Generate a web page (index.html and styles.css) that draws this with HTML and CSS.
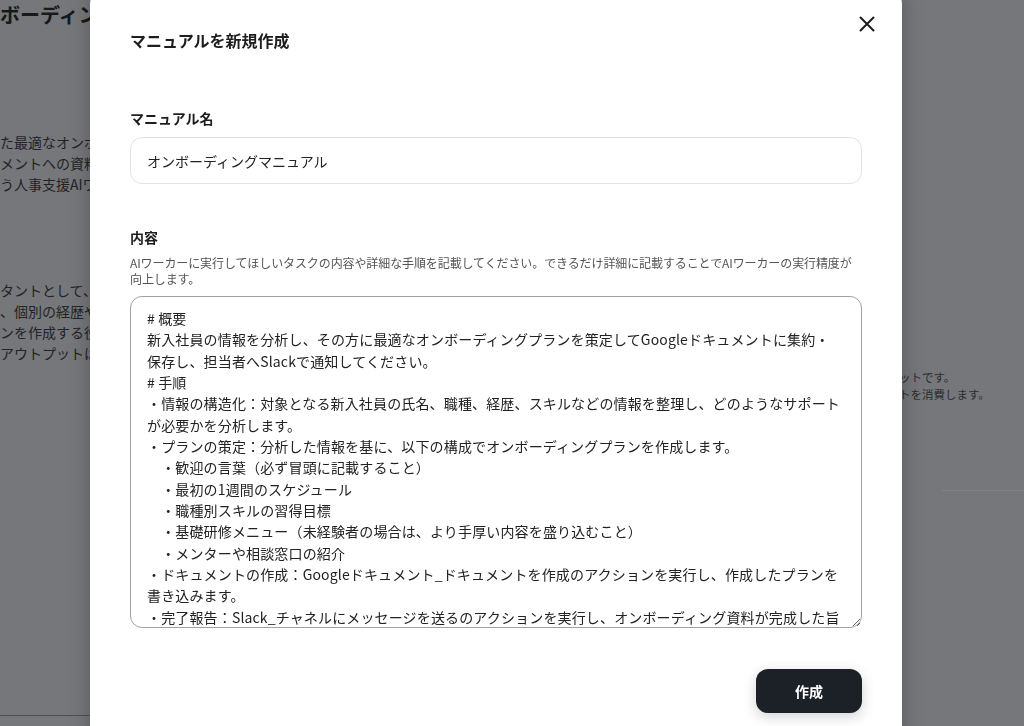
FILE: index.html
```html
<!DOCTYPE html>
<html lang="ja">
<head>
<meta charset="UTF-8">
<title>マニュアルを新規作成</title>
<link rel="stylesheet" href="styles.css">
</head>
<body>
<!-- 背景のワーカー詳細ページ（モーダル表示中なので暗い色） -->
<div class="page">
  <div class="page-main">
    <h1 class="page-title">ボーディング資料作成AIワーカー</h1>
    <p class="lead first">た最適なオンボーディング資料を作成し、<br>メントへの資料の保存とSlackでの通知までを<br>う人事支援AIワーカーです。</p>
    <p class="lead">タントとして、新入社員の情報をもとに<br>、個別の経歴やスキルに合わせたプラ<br>ンを作成する役割を担います。<br>アウトプットはGoogleドキュメントです。</p>
    <div class="page-rule"></div>
  </div>
  <aside class="page-side">
    <p class="side-note">チケットです。<br>ケットを消費します。</p>
    <div class="side-rule"></div>
  </aside>
</div>

<div class="overlay">
  <div class="modal">
    <div class="modal-header">
      <h2 class="modal-title">マニュアルを新規作成</h2>
      <button type="button" class="close-btn" aria-label="閉じる">
        <svg width="16" height="16" viewBox="0 0 16 16" fill="none" stroke="#1c1c1c" stroke-width="2" stroke-linecap="round">
          <path d="M1.5 1.5L14.5 14.5M14.5 1.5L1.5 14.5"/>
        </svg>
      </button>
    </div>

    <div class="field">
      <label for="manualName">マニュアル名</label>
      <input type="text" id="manualName" value="オンボーディングマニュアル">
    </div>

    <div class="field field-content">
      <label for="manualBody">内容</label>
      <p class="help">AIワーカーに実行してほしいタスクの内容や詳細な手順を記載してください。できるだけ詳細に記載することでAIワーカーの実行精度が<br>向上します。</p>
      <textarea id="manualBody" autofocus># 概要
新入社員の情報を分析し、その方に最適なオンボーディングプランを策定してGoogleドキュメントに集約・
保存し、担当者へSlackで通知してください。
# 手順
・情報の構造化：対象となる新入社員の氏名、職種、経歴、スキルなどの情報を整理し、どのようなサポート
が必要かを分析します。
・プランの策定：分析した情報を基に、以下の構成でオンボーディングプランを作成します。
　・歓迎の言葉（必ず冒頭に記載すること）
　・最初の1週間のスケジュール
　・職種別スキルの習得目標
　・基礎研修メニュー（未経験者の場合は、より手厚い内容を盛り込むこと）
　・メンターや相談窓口の紹介
・ドキュメントの作成：Googleドキュメント_ドキュメントを作成のアクションを実行し、作成したプランを
書き込みます。
・完了報告：Slack_チャネルにメッセージを送るのアクションを実行し、オンボーディング資料が完成した旨
を担当者に通知します。</textarea>
    </div>

    <div class="modal-footer">
      <button type="button" class="submit-btn">作成</button>
    </div>
  </div>
</div>
</body>
</html>
```

FILE: styles.css
```css
body {
  margin: 0;
  font-family: "Noto Sans CJK JP", "Liberation Sans", sans-serif;
  background-color: #76777a;
  color: #222;
  overflow: hidden;
}

/* 背景ページ（暗転後の色で描く） */
.page {
  display: grid;
  grid-template-columns: 876px 1fr;
  height: 100vh;
  white-space: nowrap;
  overflow: hidden;
}

.page-title {
  margin: 0;
  font-size: 20px;
  line-height: 30px;
  font-weight: bold;
  color: #18191b;
}

.lead {
  margin: 0;
  font-size: 14px;
  line-height: 21px;
  color: #222326;
}

.lead.first {
  margin-top: 102px;
}

.lead + .lead {
  margin-top: 85px;
}

.page-rule {
  margin-top: 351px;
  border-top: 1px solid #4f5053;
}

.side-note {
  margin: 369px 0 0;
  font-size: 11.5px;
  line-height: 17px;
  color: #2a2b2e;
}

.side-rule {
  margin: 87px 0 0 67px;
  border-top: 1px dotted #8a8b8e;
}

/* モーダル */
.overlay {
  position: fixed;
  top: 0;
  right: 0;
  bottom: 0;
  left: 0;
  z-index: 10;
  display: flex;
  padding-left: 90px;
}

.modal {
  box-sizing: border-box;
  width: 812px;
  height: calc(100% + 40px);
  margin-top: -12px;
  padding: 40px 40px 0;
  background-color: #fff;
  border-radius: 16px;
  box-shadow: 0 0 22px rgba(0, 0, 0, 0.25);
}

.modal-header {
  display: flex;
  justify-content: space-between;
  align-items: flex-start;
}

.modal-title {
  margin: 0;
  font-size: 16px;
  line-height: 24px;
  font-weight: bold;
  color: #1e1e1e;
}

.close-btn {
  width: 24px;
  height: 24px;
  margin: -16px -17px 0 0;
  padding: 0;
  display: flex;
  justify-content: center;
  align-items: center;
  border: none;
  background: none;
  cursor: pointer;
}

.field {
  margin-top: 56px;
}

.field-content {
  margin-top: 43px;
}

label {
  display: block;
  font-size: 14px;
  line-height: 20px;
  font-weight: bold;
  color: #1e1e1e;
}

input[type="text"] {
  display: block;
  box-sizing: border-box;
  width: 100%;
  height: 47px;
  margin-top: 9px;
  padding: 0 16px;
  font-family: inherit;
  font-size: 14px;
  color: #222;
  border: 1px solid #e3e3e3;
  border-radius: 12px;
  outline: none;
}

.help {
  margin: 8px 0 0;
  font-size: 12px;
  line-height: 16px;
  letter-spacing: -0.1px;
  color: #555;
}

textarea {
  display: block;
  box-sizing: border-box;
  width: 100%;
  height: 332px;
  margin-top: 9px;
  padding: 11px 16px;
  font-family: inherit;
  font-size: 14px;
  line-height: 1.525;
  letter-spacing: 0.15px;
  color: #222;
  border: 1px solid #a0a0a0;
  border-radius: 12px;
  outline: none;
  overflow: hidden;
  resize: vertical;
}

.modal-footer {
  display: flex;
  justify-content: flex-end;
  margin-top: 41px;
}

.submit-btn {
  width: 106px;
  height: 44px;
  font-family: inherit;
  font-size: 14px;
  font-weight: bold;
  color: #fff;
  background-color: #1c2027;
  border: none;
  border-radius: 12px;
  box-shadow: 0 4px 14px rgba(0, 0, 0, 0.18);
  cursor: pointer;
}
```
